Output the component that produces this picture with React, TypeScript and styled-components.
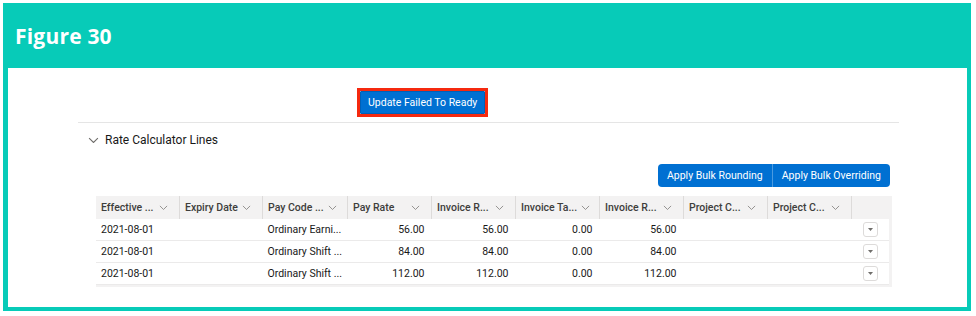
import React from "react";
import styled, { createGlobalStyle } from "styled-components";

const GlobalStyle = createGlobalStyle`
  body {
    margin: 0;
    background: #fff;
    font-family: "Roboto", "Liberation Sans", sans-serif;
  }
`;

const Frame = styled.div`
  margin: 3px;
  width: 968px;
  height: 308px;
  background: #07cbb8;
  display: flex;
  flex-direction: column;
`;

const Banner = styled.div`
  height: 65px;
  display: flex;
  align-items: center;
  padding-left: 12px;
  h1 {
    margin: 0;
    color: #fff;
    font-family: "Open Sans", sans-serif;
    font-weight: 700;
    font-size: 21px;
    letter-spacing: 0.2px;
  }
`;

const Panel = styled.div`
  flex: 1;
  background: #fff;
  margin: 0 4px 4px 5px;
  padding: 20px 68px 0 70px;
`;

const TopRow = styled.div`
  display: flex;
  justify-content: flex-start;
  padding-left: 279px;
  padding-bottom: 5px;
  border-bottom: 1px solid #e5e5e5;
`;

const Highlight = styled.div`
  border: 3px solid #f5290f;
  display: flex;
`;

const BrandButton = styled.button`
  background: #0070d2;
  border: 1px solid #0060b8;
  color: #fff;
  font-family: "Roboto", "Liberation Sans", sans-serif;
  font-size: 10.5px;
  height: 23px;
  padding: 0 7px;
  border-radius: 1px;
`;

const SectionTitle = styled.div`
  display: flex;
  align-items: center;
  gap: 6px;
  height: 34px;
  padding-left: 10px;
  color: #181818;
  font-size: 12px;
`;

const Actions = styled.div`
  display: flex;
  justify-content: flex-end;
  padding-right: 9px;
  margin-top: 7px;
`;

const GroupButton = styled.button<{ $first?: boolean }>`
  background: #0070d2;
  color: #fff;
  border: none;
  border-left: ${(p) => (p.$first ? "none" : "1px solid #4a9ae0")};
  border-radius: ${(p) => (p.$first ? "4px 0 0 4px" : "0 4px 4px 0")};
  font-family: "Roboto", "Liberation Sans", sans-serif;
  font-size: 10.5px;
  height: 23px;
  padding: 0 9px;
`;

const TableWrap = styled.div`
  margin: 9px 0 0 18px;
  width: 793px;
  border-right: 3px solid #f3f2f2;
  border-bottom: 2px solid #f3f2f2;
`;

const Table = styled.table`
  border-collapse: collapse;
  width: 793px;
  table-layout: fixed;
  font-size: 10.5px;
  color: #181818;
`;

const Th = styled.th<{ $w?: number }>`
  width: ${(p) => (p.$w ? `${p.$w}px` : "auto")};
  height: 23px;
  background: #f3f2f2;
  padding: 0;
  text-align: left;
  font-weight: 500;
  color: #3e3e3c;
  border-right: 1px solid #dddbda;
  &:last-child {
    border-right: none;
  }
`;

const HeadInner = styled.div`
  display: flex;
  align-items: center;
  justify-content: space-between;
  gap: 4px;
  padding: 0 11px 0 5px;
  white-space: nowrap;
`;

const Td = styled.td<{ $num?: boolean }>`
  height: 21px;
  padding: 0 7px 0 5px;
  text-align: ${(p) => (p.$num ? "right" : "left")};
  border-bottom: 1px solid #ebeaea;
  white-space: nowrap;
  overflow: hidden;
`;

const MenuBtn = styled.span`
  display: inline-flex;
  align-items: center;
  justify-content: center;
  width: 13px;
  height: 13px;
  border: 1px solid #dddbda;
  border-radius: 3px;
  background: #fff;
  margin-left: 6px;
`;

const Chevron = ({ size = 9, color = "#8a8886" }: { size?: number; color?: string }) => (
  <svg width={size} height={size * 0.6} viewBox="0 0 10 6" style={{ flexShrink: 0 }}>
    <polyline points="1,1 5,5 9,1" fill="none" stroke={color} strokeWidth="1" />
  </svg>
);

const Caret = () => (
  <svg width="7" height="5" viewBox="0 0 7 5">
    <polygon points="1,1 6,1 3.5,4" fill="#706e6b" />
  </svg>
);

const headers = [
  "Effective ...",
  "Expiry Date",
  "Pay Code ...",
  "Pay Rate",
  "Invoice R...",
  "Invoice Ta...",
  "Invoice R...",
  "Project C...",
  "Project C...",
];

const widths = [83, 82, 84, 83, 83, 83, 83, 83, 83];

const rows = [
  ["2021-08-01", "", "Ordinary Earni...", "56.00", "56.00", "0.00", "56.00", "", ""],
  ["2021-08-01", "", "Ordinary Shift ...", "84.00", "84.00", "0.00", "84.00", "", ""],
  ["2021-08-01", "", "Ordinary Shift ...", "112.00", "112.00", "0.00", "112.00", "", ""],
];

const numeric = [3, 4, 5, 6];

export default function App() {
  return (
    <>
      <GlobalStyle />
      <Frame>
        <Banner>
          <h1>Figure 30</h1>
        </Banner>
        <Panel>
          <TopRow>
            <Highlight>
              <BrandButton>Update Failed To Ready</BrandButton>
            </Highlight>
          </TopRow>
          <SectionTitle>
            <Chevron size={11} color="#706e6b" />
            <span>Rate Calculator Lines</span>
          </SectionTitle>
          <Actions>
            <GroupButton $first>Apply Bulk Rounding</GroupButton>
            <GroupButton>Apply Bulk Overriding</GroupButton>
          </Actions>
          <TableWrap>
            <Table>
              <thead>
                <tr>
                  {headers.map((h, i) => (
                    <Th key={i} $w={widths[i]}>
                      <HeadInner>
                        <span>{h}</span>
                        <Chevron />
                      </HeadInner>
                    </Th>
                  ))}
                  <Th />
                </tr>
              </thead>
              <tbody>
                {rows.map((r, ri) => (
                  <tr key={ri}>
                    {r.map((c, ci) => (
                      <Td key={ci} $num={numeric.includes(ci)}>
                        {c}
                      </Td>
                    ))}
                    <Td>
                      <MenuBtn>
                        <Caret />
                      </MenuBtn>
                    </Td>
                  </tr>
                ))}
              </tbody>
            </Table>
          </TableWrap>
        </Panel>
      </Frame>
    </>
  );
}
